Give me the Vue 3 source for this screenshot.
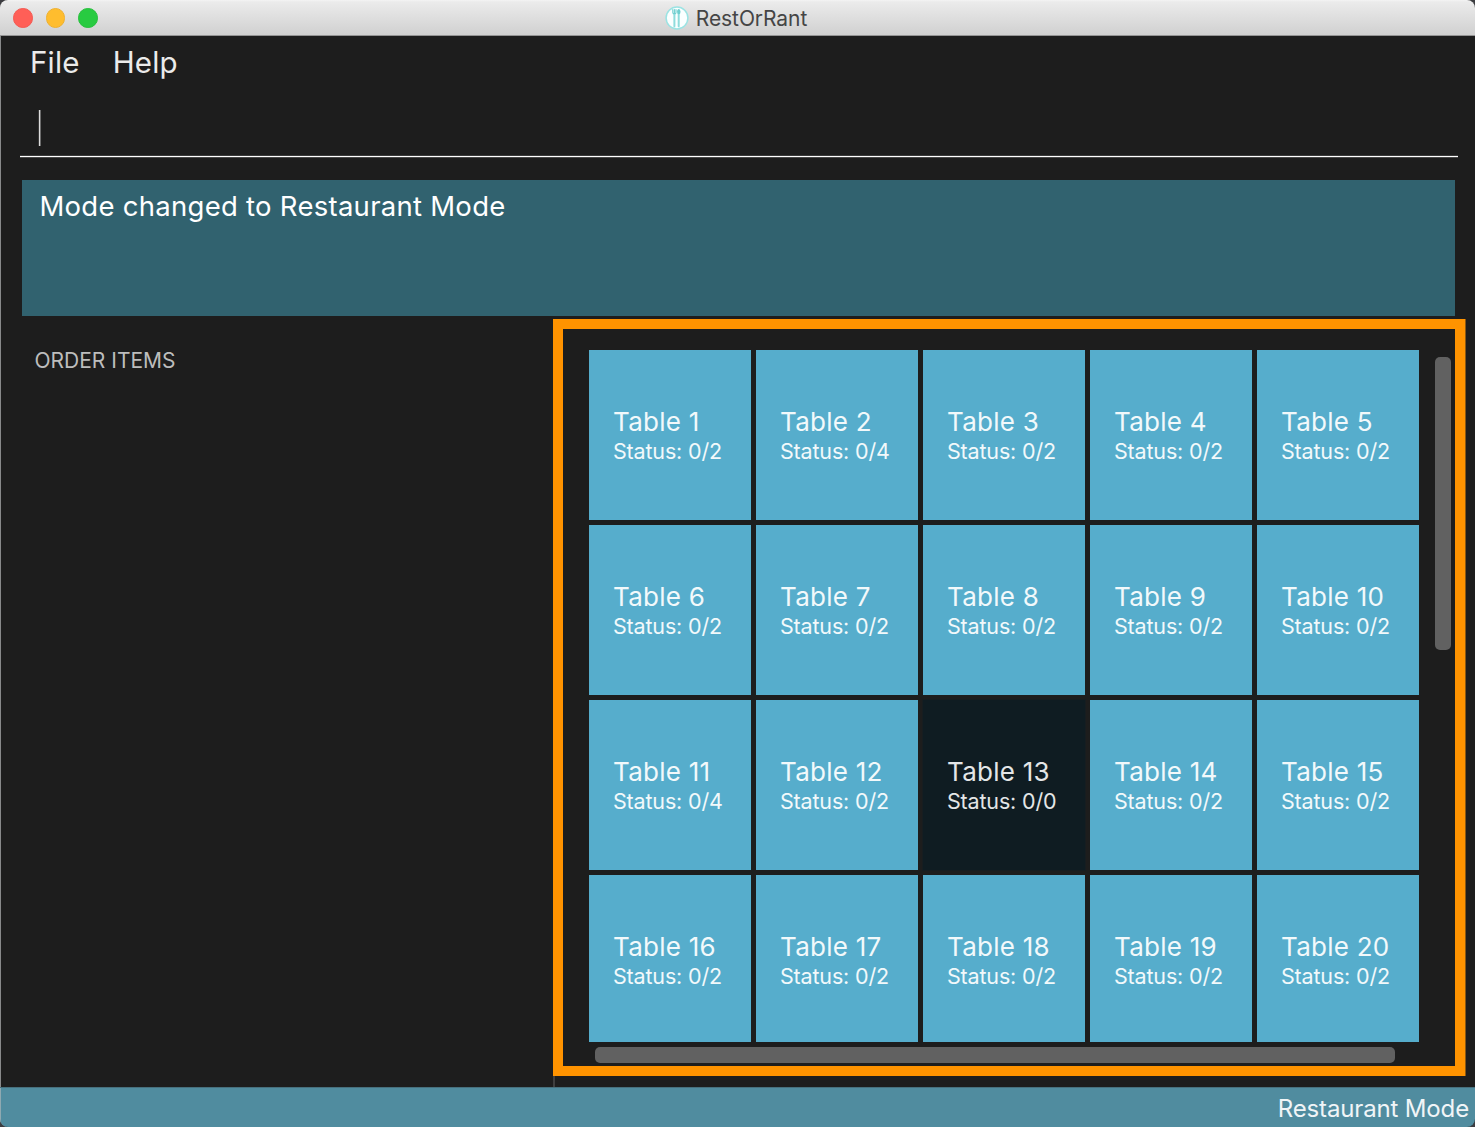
<script setup>
const seats = { 2: '0/4', 11: '0/4', 13: '0/0' }
const tables = Array.from({ length: 20 }, (_, i) => ({
  id: i + 1,
  status: seats[i + 1] ?? '0/2',
  selected: i + 1 === 13,
}))
</script>

<template>
  <div class="desktop">
    <div class="window">
      <header class="titlebar">
        <div class="lights">
          <span class="light close"></span>
          <span class="light minimise"></span>
          <span class="light zoom"></span>
        </div>
        <div class="title">
          <svg class="logo" width="24" height="24" viewBox="0 0 24 24">
            <circle cx="12" cy="12" r="10.9" fill="#fbffff" stroke="#9be3e3" stroke-width="1.5" />
            <path d="M7.8 3.6v3q0 1.4 1.6 1.8M11 3.6v3q0 1.4-1.6 1.8M9.4 3.6v5" fill="none" stroke="#6fcfd0" stroke-width="1.1" stroke-linecap="round" />
            <path d="M9.4 9v11.2" stroke="#8edcdc" stroke-width="2" stroke-linecap="round" />
            <path d="M13.7 4v16.2" stroke="#8edcdc" stroke-width="2" stroke-linecap="round" />
            <ellipse cx="13.8" cy="5.8" rx="1.7" ry="2.5" fill="#6fcfd0" />
          </svg>
          <span class="name">RestOrRant</span>
        </div>
      </header>

      <nav class="menu">
        <span class="file">File</span>
        <span class="help">Help</span>
      </nav>

      <div class="command"><span class="caret"></span></div>

      <div class="result"><span>Mode changed to Restaurant Mode</span></div>

      <main class="body">
        <section class="orders"><h2>ORDER ITEMS</h2></section>
        <section class="floor">
          <div class="frame">
            <div class="row">
              <div class="viewport">
                <div class="grid">
                  <div v-for="t in tables" :key="t.id" class="table" :class="{ selected: t.selected }">
                    <div class="label">Table {{ t.id }}</div>
                    <div class="status">Status: {{ t.status }}</div>
                  </div>
                </div>
              </div>
              <div class="vbar"></div>
            </div>
            <div class="hbar"></div>
          </div>
          <div class="divider"></div>
        </section>
      </main>

      <footer class="statusbar"><span>Restaurant Mode</span></footer>
    </div>
  </div>
</template>

<style>
body { margin: 0; }
</style>

<style scoped>
.desktop {
  width: 1475px;
  height: 1127px;
  background: #3c3d41;
  overflow: hidden;
  font-family: Inter, "Liberation Sans", sans-serif;
  white-space: nowrap;
}
.window {
  box-sizing: border-box;
  width: 1475px;
  height: 1127px;
  display: flex;
  flex-direction: column;
  background: #1d1d1d;
  border-radius: 8px;
  overflow: hidden;
  box-shadow: inset 1px 0 #88898a;
}
.titlebar {
  box-sizing: border-box;
  height: 36px;
  flex: none;
  display: grid;
  grid-template-columns: 1fr auto 1fr;
  align-items: center;
  background: linear-gradient(#f4f4f4 0, #ebebeb 2px, #d1d1d1 34px);
  border-bottom: 1px solid #949494;
}
.lights { display: flex; gap: 13px; padding: 1px 0 0 13px; }
.light {
  box-sizing: border-box;
  width: 19.5px;
  height: 19.5px;
  border-radius: 50%;
}
.close { background: #ff5f57; border: 1px solid #f4574f; }
.minimise { background: #ffbd2e; border: 1px solid #eeb02f; }
.zoom { background: #28cb41; border: 1px solid #24bf3a; }
.title { display: flex; align-items: center; gap: 7px; padding: 1px 3px 0 0; }
.name { font-size: 21px; line-height: 26px; padding-top: 2px; color: #454545; letter-spacing: -0.08px; }
.menu {
  height: 54px;
  flex: none;
  display: flex;
  gap: 33px;
  padding-left: 30px;
  font-size: 29.5px;
  line-height: 52px;
  letter-spacing: 0.2px;
  color: #ebebeb;
}
.command {
  box-sizing: border-box;
  height: 67px;
  flex: none;
  margin: 0 17px 0 20px;
  padding: 20px 0 0 19px;
  border-bottom: 1px solid #fff;
  box-shadow: 0 1px #4a4a4a, inset 0 -1px #3a3a3a;
}
.caret {
  display: block;
  width: 1px;
  height: 36px;
  background: #dcdcdc;
  box-shadow: 1px 0 #6c6c6c, -1px 0 #3c3c3c;
}
.result {
  box-sizing: border-box;
  height: 136px;
  flex: none;
  margin: 23px 20px 0 22px;
  padding: 10px 17.5px;
  background: #31626f;
  color: #fff;
  font-size: 27.5px;
  line-height: 32px;
  letter-spacing: 0.27px;
}
.body { flex: 1; min-height: 0; display: flex; }
.orders { box-sizing: border-box; width: 553px; padding: 31px 0 0 34.5px; }
.orders h2 {
  margin: 0;
  font-size: 21px;
  line-height: 28px;
  font-weight: 400;
  color: #bdbdbd;
}
.floor {
  box-sizing: border-box;
  flex: 1;
  padding: 3px 0 0;
}
.frame {
  box-sizing: border-box;
  width: 912px;
  height: 757px;
  border: 10px solid #ff9300;
  background: #1d1d1d;
  padding: 21px 4px 0 26px;
  box-shadow: 1px 0 #8a5712;
}
.divider { width: 2px; height: 11px; background: #3f3f3f; }
.row { display: flex; justify-content: space-between; }
.viewport { width: 830px; height: 692px; overflow: hidden; }
.grid {
  display: grid;
  grid-template-columns: repeat(5, 162px);
  grid-auto-rows: 170px;
  gap: 5px;
}
.table {
  box-sizing: border-box;
  padding: 56px 0 0 24px;
  background: #56adcc;
  color: #f2f9fb;
}
.table.selected { background: #0f1c22; color: #e4e6e7; box-shadow: 0 0 0 1px #171d20; }
.label { font-size: 26px; line-height: 32px; letter-spacing: 0.25px; }
.status { font-size: 21.5px; line-height: 27px; letter-spacing: -0.17px; }
.vbar {
  width: 16px;
  height: 293px;
  margin-top: 7px;
  border-radius: 5px;
  background: #616161;
}
.hbar {
  width: 800px;
  height: 16px;
  margin: 5px 0 0 6px;
  border-radius: 5px;
  background: #616161;
}
.statusbar {
  box-sizing: border-box;
  height: 40px;
  flex: none;
  padding-right: 6px;
  text-align: right;
  background: #508c9f;
  border-top: 1px solid #47707d;
  box-shadow: inset 1px 0 #8fa9b1;
  color: #f0f5f7;
  font-size: 24px;
  line-height: 41px;
  letter-spacing: -0.15px;
}
</style>
